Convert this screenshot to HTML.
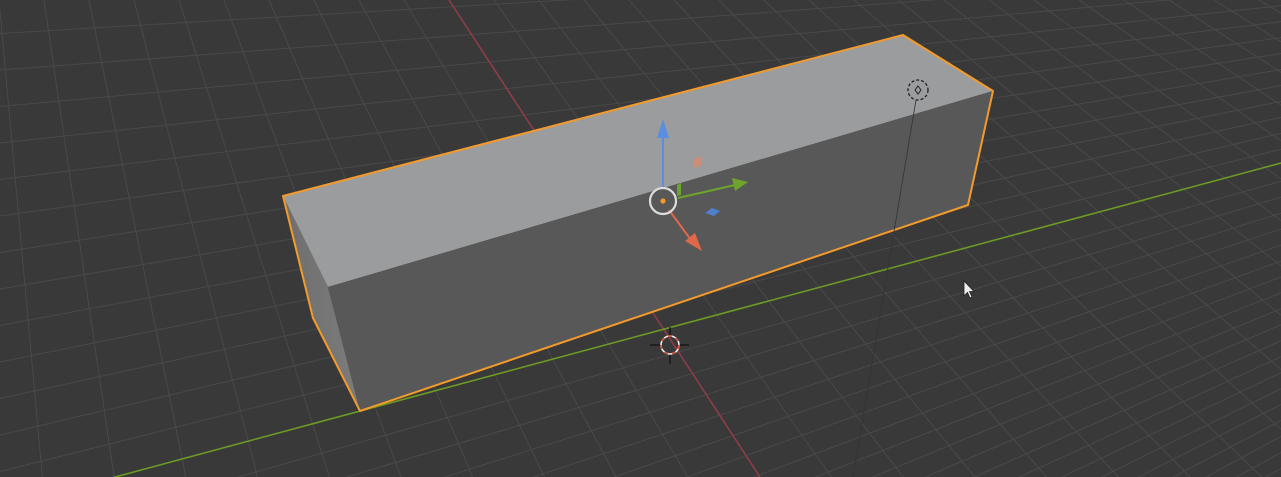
<!DOCTYPE html>
<html><head><meta charset="utf-8"><style>
html,body{margin:0;padding:0;background:#393939;overflow:hidden;width:1281px;height:477px}
svg{display:block}
</style></head><body>
<svg id="s" width="1281" height="477" viewBox="0 0 1281 477" xmlns="http://www.w3.org/2000/svg">
<rect width="1281" height="477" fill="#393939"/>
<g id="grid" stroke="#494949" stroke-width="1" fill="none"></g>
<line x1="449" y1="0" x2="760" y2="477" stroke="#8e3c46" stroke-width="1.6"/>
<line x1="0" y1="508" x2="1281" y2="163" stroke="#6c9a24" stroke-width="1.6"/>
<defs>
<linearGradient id="lg" x1="0" y1="0" x2="1" y2="0">
<stop offset="0" stop-color="#6e6e6e"/><stop offset="1" stop-color="#7c7c7c"/>
</linearGradient>
</defs>
<polygon points="283,196 328,287 360,411 313,318" fill="url(#lg)"/>
<polygon points="283,196 903,35 993,91 328,287" fill="#9b9c9d"/>
<polygon points="328,287 993,91 968,205 360,411" fill="#585858"/>
<polygon points="283,196 903,35 993,91 968,205 360,411 313,318" fill="none" stroke="#f39a2c" stroke-width="2" stroke-linejoin="round"/>
<line x1="916" y1="100" x2="853" y2="477" stroke="#333" stroke-width="0.8"/>
<circle cx="918" cy="90" r="10" fill="none" stroke="#222" stroke-width="1.3" stroke-dasharray="3,2"/>
<path d="M918 86 L921 90 L918 94 L915 90 Z" fill="none" stroke="#222" stroke-width="1"/>
<line x1="663" y1="188" x2="663" y2="135" stroke="#5a8ee0" stroke-width="2"/>
<polygon points="663,119 669,138 657,138" fill="#5a8ee0"/>
<line x1="678" y1="198" x2="735" y2="185" stroke="#6ea42c" stroke-width="2"/>
<polygon points="748,182 732,178 735,191" fill="#6ea42c"/>
<polygon points="677,185 681,183 681,195 677,196" fill="#6ea42c"/>
<line x1="669" y1="210" x2="691" y2="240" stroke="#e0684a" stroke-width="2"/>
<polygon points="702,251 685,241 695,233" fill="#e0684a"/>
<polygon points="694,159 702,156 702,165 694,168" fill="#d9896e" opacity="0.8"/>
<polygon points="705,213 712,208 720,211 714,216" fill="#4f7fcc"/>
<circle cx="663" cy="201" r="13" fill="none" stroke="#dcdcdc" stroke-width="2.2"/>
<circle cx="663" cy="201" r="2.6" fill="#f39a2c"/>
<g stroke="#111" stroke-width="1.2">
<line x1="670" y1="327" x2="670" y2="337"/><line x1="670" y1="353" x2="670" y2="364"/>
<line x1="650" y1="345" x2="661" y2="345"/><line x1="679" y1="345" x2="689" y2="345"/>
</g>
<circle cx="670" cy="345" r="9" fill="none" stroke="#eee" stroke-width="1.6"/>
<circle cx="670" cy="345" r="9" fill="none" stroke="#d8503a" stroke-width="1.6" stroke-dasharray="4,4"/>
<path d="M964 281 L964 296 L967.5 292.5 L970 298 L972 297 L969.5 291.5 L974 291.5 Z" fill="#eee" stroke="#222" stroke-width="0.8"/>
</svg>
<script>
(function(){
var g=document.getElementById('grid'),out='';
var vx=-74,vy=-803;
for(var k=-40;k<=60;k++){
  if(k===0)continue;
  var x0=449+45*k;
  var dx=(x0-vx)/(0-vy);
  out+='<line x1="'+x0+'" y1="0" x2="'+(x0+dx*477)+'" y2="477"/>';
}
var wx=2276,wy=-101;
for(var k=-40;k<=40;k++){
  if(k===0)continue;
  var y0=508-36.5*k;
  var s=(wy-y0)/wx;
  out+='<line x1="0" y1="'+y0+'" x2="1281" y2="'+(y0+s*1281)+'"/>';
}
g.innerHTML=out;
})();
</script>
</body></html>
